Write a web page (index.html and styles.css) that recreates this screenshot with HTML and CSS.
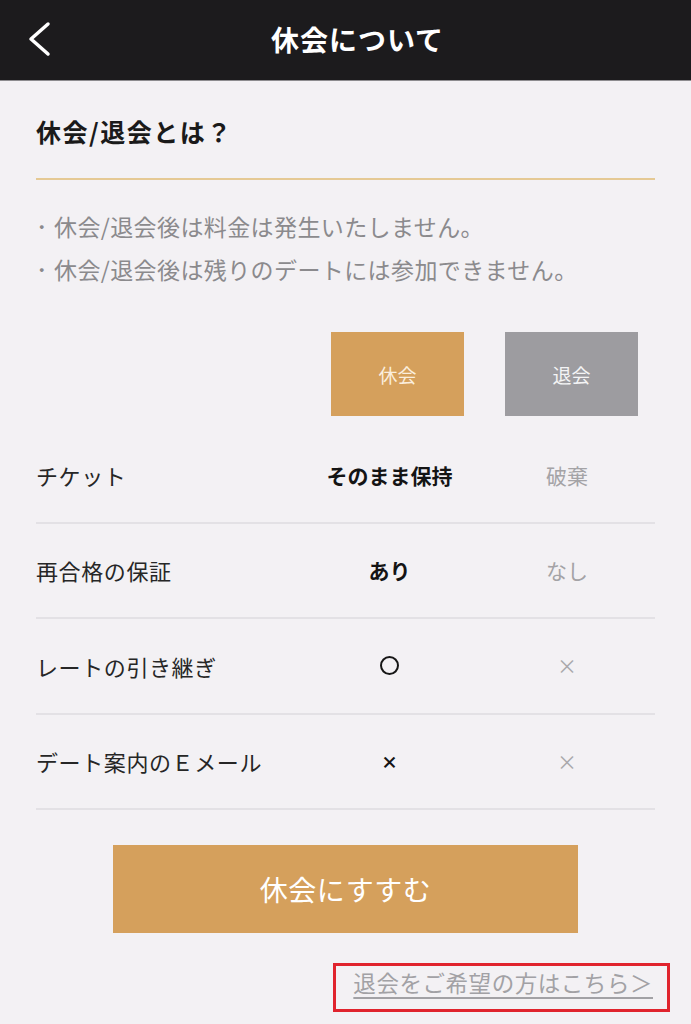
FILE: index.html
```html
<!DOCTYPE html>
<html lang="ja">
<head>
<meta charset="utf-8">
<title>休会について</title>
<link rel="stylesheet" href="styles.css">
</head>
<body>
<header class="topbar">
  <a class="back" href="#" aria-label="戻る">
    <svg width="24" height="36" viewBox="0 0 24 36"><polyline points="20,3 3,18 20,33" fill="none" stroke="#fff" stroke-width="3.5" stroke-linecap="round" stroke-linejoin="round"/></svg>
  </a>
  <h1 class="topbar-title">休会について</h1>
</header>
<main class="content">
  <h2 class="section-title">休会/退会とは？</h2>
  <ul class="notes">
    <li><span class="dot">･</span>休会/退会後は料金は発生いたしません。</li>
    <li><span class="dot">･</span>休会/退会後は残りのデートには参加できません。</li>
  </ul>
  <div class="tabs">
    <div class="tab tab-rest">休会</div>
    <div class="tab tab-quit">退会</div>
  </div>
  <div class="table">
    <div class="row">
      <div class="label">チケット</div>
      <div class="val strong">そのまま保持</div>
      <div class="val weak">破棄</div>
    </div>
    <div class="row">
      <div class="label">再合格の保証</div>
      <div class="val strong">あり</div>
      <div class="val weak">なし</div>
    </div>
    <div class="row">
      <div class="label">レートの引き継ぎ</div>
      <div class="val"><span class="circle"></span></div>
      <div class="val weak x-thin">×</div>
    </div>
    <div class="row">
      <div class="label">デート案内のＥメール</div>
      <div class="val strong x-bold">×</div>
      <div class="val weak x-thin">×</div>
    </div>
  </div>
  <div class="cta-wrap">
    <a class="cta" href="#">休会にすすむ</a>
  </div>
</main>
<div class="link-row">
  <a class="quit-link" href="#">退会をご希望の方はこちら＞</a>
</div>
</body>
</html>
```
FILE: styles.css
```css
* { box-sizing: border-box; }
html, body {
  margin: 0;
  padding: 0;
  background: #f3f1f4;
  font-family: "Noto Sans CJK JP", "Noto Sans", sans-serif;
  color: #222;
}
.topbar {
  height: 81px;
  background: #1c1b1d;
  border-bottom: 1px solid #8d8c8f;
  display: flex;
  align-items: center;
  padding-left: 28px;
}
.back {
  display: flex;
  width: 24px;
  height: 36px;
  margin-top: -2px;
}
.topbar-title {
  flex: 1;
  margin: 0;
  padding-right: 28px;
  text-align: center;
  color: #fff;
  font-size: 28px;
  font-weight: 700;
  letter-spacing: 1px;
  line-height: 1;
  margin-top: -2px;
}
.content {
  padding: 0 36px;
}
.section-title {
  margin: 34px 0 0;
  font-size: 25px;
  font-weight: 700;
  letter-spacing: 1.5px;
  line-height: 32px;
  color: #1a1a1a;
  padding-bottom: 31px;
  border-bottom: 2px solid #e5c994;
}
.notes {
  list-style: none;
  margin: 25px 0 0;
  padding: 0;
  color: #8b8a8d;
  font-size: 23px;
  letter-spacing: 0.4px;
  line-height: 43px;
}
.notes .dot {
  display: inline-block;
  width: 18px;
}
.tabs {
  display: flex;
  justify-content: flex-end;
  gap: 41px;
  padding-right: 17px;
  margin-top: 41px;
}
.tab {
  width: 133px;
  height: 84px;
  display: flex;
  align-items: center;
  justify-content: center;
  font-size: 19px;
}
.tab-rest {
  background: #d5a05c;
  color: #fbeedd;
}
.tab-quit {
  background: #9d9ca0;
  color: #f4f4f5;
}
.table {
  margin-top: 12px;
}
.row {
  display: grid;
  grid-template-columns: 1fr 179px 176px;
  align-items: center;
  height: 95.5px;
  border-bottom: 2px solid #e3e1e5;
}
.label {
  font-size: 22px;
  letter-spacing: 0.6px;
  color: #262626;
}
.val {
  text-align: center;
  font-size: 21px;
  display: flex;
  justify-content: center;
  align-items: center;
}
.strong {
  font-weight: 700;
  color: #141414;
}
.weak {
  color: #a4a3a6;
}
.x-thin {
  font-size: 20px;
  color: #a9a8ab;
}
.x-bold {
  font-size: 17px;
  font-weight: 900;
}
.circle {
  display: block;
  width: 19px;
  height: 19px;
  border: 2.5px solid #161616;
  border-radius: 50%;
}
.cta-wrap {
  display: flex;
  justify-content: center;
  margin-top: 35px;
}
.cta {
  width: 465px;
  height: 88px;
  background: #d5a05c;
  color: #fff;
  font-size: 28px;
  text-decoration: none;
  display: flex;
  align-items: center;
  justify-content: center;
  letter-spacing: 0.5px;
}
.link-row {
  display: flex;
  justify-content: flex-end;
  padding-right: 21px;
  margin-top: 30px;
}
.quit-link {
  display: block;
  border: 3px solid #e0232d;
  padding: 0 14px 10px 17px;
  line-height: 33px;
  font-size: 22.5px;
  letter-spacing: 0.55px;
  color: #a2a1a5;
  text-decoration: underline;
  text-decoration-thickness: 1.5px;
  text-underline-offset: 5px;
}
```
